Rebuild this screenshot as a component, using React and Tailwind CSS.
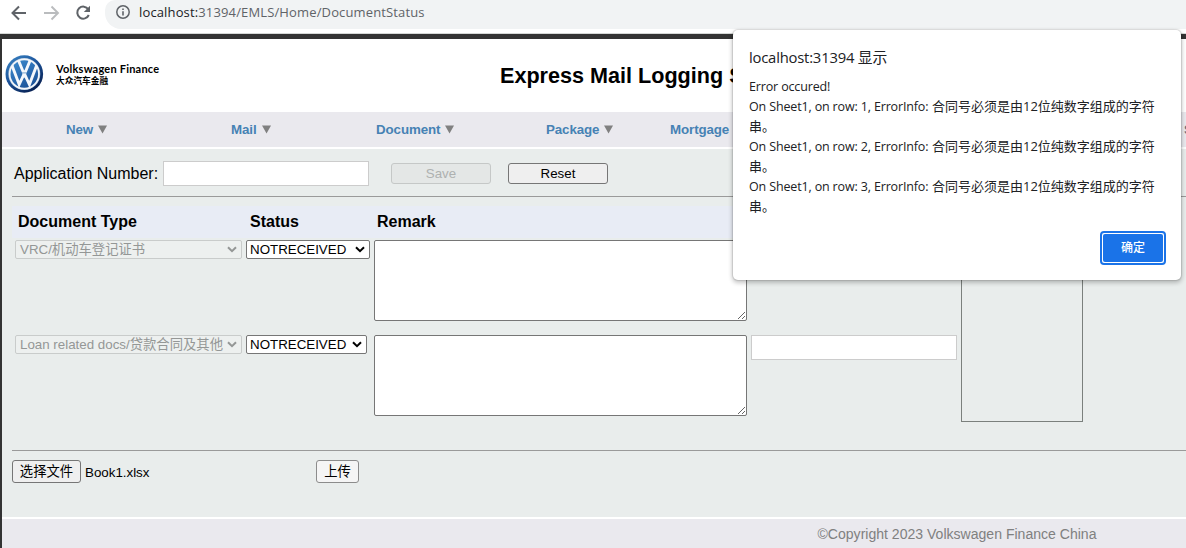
import React from "react";

function Chevron({ className }) {
  return (
    <svg viewBox="0 0 10 7" className={`h-[7px] w-[10px] shrink-0 ${className}`} fill="none">
      <path d="M1 1.2 5 5.2 9 1.2" stroke="currentColor" strokeWidth="2" />
    </svg>
  );
}

function SelectBox({ children, disabled, className }) {
  const tone = disabled
    ? "border-[#c9cccb] bg-[#edf0ef] text-[#949796] pl-[4px]"
    : "border-[#767676] bg-white text-black pl-[3px]";
  return (
    <div className={`flex h-[19px] items-center justify-between rounded-[2px] border pr-[4px] text-[13.33px] leading-[17px] whitespace-nowrap ${tone} ${className}`}>
      <span>{children}</span>
      <Chevron className={disabled ? "text-[#949796]" : "text-black"} />
    </div>
  );
}

function NavItem({ label, className, arrow = true }) {
  return (
    <div className={`flex shrink-0 items-center whitespace-nowrap ${className}`}>
      <span>{label}</span>
      {arrow && (
        <svg viewBox="0 0 9 9" className="ml-[5px] h-[9px] w-[9px]">
          <path d="M0 0.5h9L4.5 8.500z" fill="#808080" />
        </svg>
      )}
    </div>
  );
}

function Logo() {
  return (
    <svg viewBox="0 0 40 40" className="h-[40px] w-[40px] shrink-0">
      <defs>
        <linearGradient id="ring" x1="0" y1="0" x2="0.7" y2="1">
          <stop offset="0" stopColor="#3e8ac8" />
          <stop offset="0.5" stopColor="#1b539b" />
          <stop offset="1" stopColor="#071f50" />
        </linearGradient>
        <linearGradient id="disc" x1="0" y1="0" x2="0.6" y2="1">
          <stop offset="0" stopColor="#3b8acb" />
          <stop offset="0.5" stopColor="#2c70b7" />
          <stop offset="1" stopColor="#1d5499" />
        </linearGradient>
      </defs>
      <circle cx="20.3" cy="20" r="18.8" fill="url(#ring)" />
      <circle cx="20.3" cy="20" r="16" fill="#a9bfd6" />
      <circle cx="20.3" cy="20" r="15.400" fill="#f3f6fa" />
      <circle cx="20.3" cy="20" r="13.800" fill="url(#disc)" />
      <g fill="none" stroke="#f4f7fb" strokeWidth="2.900" strokeLinejoin="miter">
        <path d="M14.500 6.500 20.300 20.500 26.100 6.500" />
        <path d="M8 11.500 15.200 30.500 20.300 19.500 25.400 30.500 32.600 11.500" />
      </g>
      <path d="M17.9 18.900h4.800" stroke="#5b8fc2" strokeWidth="0.8" />
    </svg>
  );
}

function BrowserBar() {
  return (
    <div className="flex h-[34px] w-full shrink-0 items-start border-b border-[#d5d8d6] bg-white">
      <div className="flex h-[25px] w-[105px] items-center pl-[11px]">
        <svg viewBox="0 0 16 16" className="h-[16px] w-[16px]" fill="none" stroke="#5f6368" strokeWidth="2">
          <path d="M15 8H2M8 1.5 1.5 8 8 14.5" />
        </svg>
        <svg viewBox="0 0 16 16" className="ml-[17px] h-[16px] w-[16px]" fill="none" stroke="#babcbe" strokeWidth="1.9">
          <path d="M0 8h13.5M7.5 1.5 14 8l-6.500 6.500" />
        </svg>
        <svg viewBox="0 0 16 16" className="ml-[15px] h-[16px] w-[16px]" fill="none">
          <path d="M13.300 4.300A6 6 0 1 0 13.800 10" stroke="#5f6368" strokeWidth="2" />
          <path d="M15 0.800v6.200H8.800z" fill="#5f6368" />
        </svg>
      </div>
      <div className="flex h-[29px] flex-1 items-start rounded-bl-[16px] rounded-tl-[10px] bg-[#f1f3f4] pl-[11px]">
        <svg viewBox="0 0 14 14" className="mt-[5px] h-[14px] w-[14px]" fill="none" stroke="#5f6368" strokeWidth="1.5">
          <circle cx="7" cy="7" r="6.200" />
          <path d="M7 6.200v4.300M7 3.400v1.600" strokeWidth="1.600" />
        </svg>
        <div className="ml-[9px] mt-[2px] font-['Open_Sans','Noto_Sans',sans-serif] text-[13px] leading-5 tracking-[0.14px] whitespace-nowrap text-[#5f6368]">
          <span className="text-[#202124]">localhost:</span>31394/EMLS/Home/DocumentStatus
        </div>
      </div>
    </div>
  );
}

function ErrorDialog() {
  return (
    <div className="absolute left-[733px] top-[30px] flex h-[250px] w-[448px] flex-col rounded-[5px] bg-white pl-4 pr-[15px] font-['Open_Sans','Noto_Sans_CJK_SC',sans-serif] text-[#202124] shadow-[0_0_1px_1px_rgba(0,0,0,0.10),0_2px_4px_1px_rgba(0,0,0,0.22)]">
      <div className="mt-[16px] h-[22px] text-[14.800px] leading-[22px] tracking-[-0.2px] whitespace-nowrap">localhost:31394 显示</div>
      <div className="mt-[9px] flex flex-col text-[12.500px] leading-5 tracking-[-0.15px] whitespace-nowrap">
        <div className="h-5">Error occured!</div>
        {[1, 2, 3].map((n) => (
          <div key={n} className="h-10">
            <div className="flex h-5">
              <span className="w-[183px]">On Sheet1, on row: {n}, ErrorInfo:</span>
              <span className="-mt-px text-[13px] tracking-[0px]">合同号必须是由12位纯数字组成的字符</span>
            </div>
            <div className="-mt-px h-5 text-[13px] tracking-[0px]">串。</div>
          </div>
        ))}
      </div>
      <button className="mt-[14px] flex h-[34px] w-[66px] items-center justify-center self-end rounded-[4px] border-2 border-[#1a73e8] bg-white p-px">
        <span className="flex h-[28px] w-full items-center justify-center rounded-[2px] bg-[#1a73e8] text-[12px] leading-4 font-medium text-white">确定</span>
      </button>
    </div>
  );
}

function Row({ type, statusWidth, tail }) {
  return (
    <div className="flex h-[95px] items-start pl-[3px]">
      <SelectBox disabled className="w-[227px]">{type}</SelectBox>
      <div className="w-[128px] shrink-0 pl-1">
        <SelectBox className={statusWidth}>NOTRECEIVED</SelectBox>
      </div>
      <textarea className="ml-[4px] h-[81px] w-[373px] shrink-0 resize rounded-[2px] border border-[#767676] bg-white" />
      {tail && <input className="ml-[4px] h-[25px] w-[206px] border border-[#ccc] bg-white" />}
    </div>
  );
}

export default function App() {
  return (
    <div className="relative flex h-[548px] w-[1186px] flex-col overflow-hidden bg-white font-['Liberation_Sans','Noto_Sans_CJK_SC',sans-serif] text-black">
      <BrowserBar />
      <div className="flex flex-1 flex-col border-l-2 border-t-[5px] border-[#333]">
        <header className="flex h-[73px] shrink-0 items-start pl-[2px] pt-[15px]">
          <Logo />
          <div className="ml-[12px] mt-[7px] w-[444px] text-black">
            <div className="font-['Lato',sans-serif] text-[11px] leading-[15px] font-bold tracking-[0.22px]">Volkswagen Finance</div>
            <div className="text-[8.700px] leading-[10px] font-bold">大众汽车金融</div>
          </div>
          <h1 className="mt-[9px] text-[21.600px] leading-[26px] font-bold whitespace-nowrap">Express Mail Logging System</h1>
        </header>

        <nav className="flex h-[35px] shrink-0 items-center overflow-hidden bg-[#eae9ee] pl-[64px] text-[13.33px] leading-4 font-bold tracking-[-0.1px] text-[#4682b4]">
          <NavItem label="New" className="w-[165px]" />
          <NavItem label="Mail" className="w-[145px]" />
          <NavItem label="Document" className="w-[170px]" />
          <NavItem label="Package" className="w-[124px]" />
          <NavItem label="Mortgage" className="w-[514px]" />
          <NavItem label="System" arrow={false} className="text-[#6d6d80]" />
        </nav>

        <main className="mt-[2px] flex h-[368px] shrink-0 flex-col bg-[#e9edec] pl-[10px]">
          <div className="flex h-[47px] items-start pl-[2px] pt-[12px]">
            <label className="w-[149px] text-[16px] leading-[25px] whitespace-nowrap">Application Number:</label>
            <input className="h-[25px] w-[206px] border border-[#ccc] bg-white" />
            <button className="ml-[22px] mt-[2px] h-[21px] w-[100px] rounded-[3px] border border-[#c5c8c7] bg-[#e4e7e6] text-[13.33px] leading-[19px] text-[#aeb1b0]">Save</button>
            <button className="ml-[17px] mt-[2px] h-[21px] w-[100px] rounded-[3px] border border-[#767676] bg-[#efefef] text-[13.33px] leading-[19px]">Reset</button>
          </div>
          <div className="h-px w-full bg-[#9a9a9a]" />

          <div className="mt-[9px] flex h-[244px]">
            <div className="flex w-[947px] flex-col">
              <div className="mb-[2px] flex h-[32px] items-center bg-[#e8ecf5] pl-[6px] text-[16px] font-bold">
                <span className="w-[232px]">Document Type</span>
                <span className="w-[127px]">Status</span>
                <span>Remark</span>
              </div>
              <Row type="VRC/机动车登记证书" statusWidth="w-[124px]" />
              <Row type="Loan related docs/贷款合同及其他" statusWidth="w-[121px]" tail />
            </div>
            <div className="ml-[2px] h-[216px] w-[122px] border border-[#7b807d]" />
          </div>
          <div className="h-px w-full bg-[#9a9a9a]" />

          <div className="flex items-center pt-[9px] text-[13.33px]">
            <button className="h-[23px] w-[69px] rounded-[3px] border border-[#767676] bg-[#efefef] pt-px leading-[20px] whitespace-nowrap">选择文件</button>
            <span className="ml-[4px] w-[231px] pt-px leading-[21px]">Book1.xlsx</span>
            <button className="h-[23px] w-[43px] rounded-[3px] border border-[#8c8c8c] bg-[#f5f5f5] pt-px leading-[20px] whitespace-nowrap">上传</button>
          </div>
        </main>

        <footer className="mt-[2px] flex-1 bg-[#eae9ee] pl-[815.500px] pt-[6px] text-[14.050px] leading-[18px] whitespace-nowrap text-[#808080]">
          ©Copyright 2023 Volkswagen Finance China
        </footer>
      </div>
      <ErrorDialog />
    </div>
  );
}
